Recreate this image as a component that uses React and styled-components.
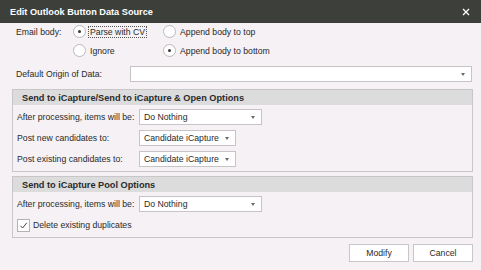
import styled, { createGlobalStyle } from 'styled-components'

const GlobalStyle = createGlobalStyle`
  html, body {
    margin: 0;
    padding: 0;
    background: #f5f1f4;
  }
  body {
    font-family: "Liberation Sans", Arial, sans-serif;
    font-size: 8.7px;
    color: #2a2a2a;
  }
`

function App() {
  return (
    <Dialog>
      <GlobalStyle />
      <TitleBar>
        <span>Edit Outlook Button Data Source</span>
        <svg width="8" height="8" viewBox="0 0 8 8">
          <path d="M1 1 L7 7 M7 1 L1 7" stroke="#ffffff" strokeWidth="1.3" />
        </svg>
      </TitleBar>

      <Body>
        <EmailGrid>
          <Label>Email body:</Label>
          <Radio checked focused>Parse with CV</Radio>
          <Radio>Append body to top</Radio>
          <span />
          <Radio>Ignore</Radio>
          <Radio checked>Append body to bottom</Radio>
        </EmailGrid>

        <OriginRow>
          <Label width={114}>Default Origin of Data:</Label>
          <Combo grow />
        </OriginRow>

        <Group>
          <GroupHeader>Send to iCapture/Send to iCapture &amp; Open Options</GroupHeader>
          <GroupBody>
            <FieldRow>
              <Label width={122}>After processing, items will be:</Label>
              <Combo width={123} value="Do Nothing" />
            </FieldRow>
            <FieldRow>
              <Label width={122}>Post new candidates to:</Label>
              <Combo width={97} value="Candidate iCapture" />
            </FieldRow>
            <FieldRow>
              <Label width={122}>Post existing candidates to:</Label>
              <Combo width={97} value="Candidate iCapture" />
            </FieldRow>
          </GroupBody>
        </Group>

        <Group second>
          <GroupHeader>Send to iCapture Pool Options</GroupHeader>
          <GroupBody>
            <FieldRow>
              <Label width={122}>After processing, items will be:</Label>
              <Combo width={123} value="Do Nothing" />
            </FieldRow>
            <CheckRow>
              <CheckBox>
                <svg width="9" height="9" viewBox="0 0 9 9">
                  <path d="M1.5 4.8 L3.6 7 L7.8 1.8" stroke="#444" strokeWidth="1" fill="none" />
                </svg>
              </CheckBox>
              <span>Delete existing duplicates</span>
            </CheckRow>
          </GroupBody>
        </Group>

        <Footer>
          <Button>Modify</Button>
          <Button>Cancel</Button>
        </Footer>
      </Body>
    </Dialog>
  )
}

function Radio({ checked, focused, children }) {
  return (
    <RadioItem>
      <RadioCircle>{ checked && <RadioDot /> }</RadioCircle>
      <RadioText focused={ focused }>{ children }</RadioText>
    </RadioItem>
  )
}

function Combo({ width, grow, value }) {
  return (
    <ComboBox width={ width } grow={ grow }>
      <span>{ value }</span>
      <Arrow />
    </ComboBox>
  )
}

// Styled Components
const Dialog = styled.div`
  width: 481px;
  height: 270px;
  background: #f5f1f4;
  display: flex;
  flex-direction: column;
  overflow: hidden;
`

const TitleBar = styled.div`
  height: 23px;
  flex: none;
  background: #3d3f3b;
  color: #ffffff;
  font-weight: bold;
  font-size: 9.2px;
  display: flex;
  align-items: center;
  justify-content: space-between;
  padding: 0 11px 0 10px;
`

const Body = styled.div`
  padding: 0 8px 0 12px;
  display: flex;
  flex-direction: column;
`

const EmailGrid = styled.div`
  display: grid;
  grid-template-columns: 57px 90px auto;
  grid-auto-rows: 17px;
  row-gap: 2px;
  padding-left: 4px;
  align-items: center;
`

const Label = styled.span`
  width: ${ (p) => (p.width ? `${ p.width }px` : 'auto') };
  flex: none;
  white-space: nowrap;
`

const RadioItem = styled.div`
  display: flex;
  align-items: center;
  gap: 2px;
`

const RadioCircle = styled.span`
  width: 11px;
  height: 11px;
  border-radius: 50%;
  border: 1px solid #bab8ba;
  background: #ffffff;
  display: flex;
  align-items: center;
  justify-content: center;
`

const RadioDot = styled.span`
  width: 3px;
  height: 3px;
  border-radius: 50%;
  background: #3a3a3a;
`

const RadioText = styled.span`
  padding: 0 1px;
  border: 1px dotted ${ (p) => (p.focused ? '#555' : 'transparent') };
  white-space: nowrap;
`

const OriginRow = styled.div`
  display: flex;
  align-items: center;
  margin-top: 7px;
  padding-left: 4px;
  margin-right: 1px;
`

const ComboBox = styled.div`
  height: 16px;
  box-sizing: border-box;
  width: ${ (p) => (p.grow ? 'auto' : `${ p.width }px`) };
  flex: ${ (p) => (p.grow ? '1' : 'none') };
  background: #ffffff;
  border: 1px solid #c6c4c6;
  display: flex;
  align-items: center;
  justify-content: space-between;
  padding: 0 6px 0 4px;
`

const Arrow = styled.span`
  width: 0;
  height: 0;
  border-left: 2.5px solid transparent;
  border-right: 2.5px solid transparent;
  border-top: 3px solid #6a6a6a;
`

const Group = styled.div`
  margin-top: ${ (p) => (p.second ? '4px' : '7px') };
  border: 1px solid #c8c6c8;
  display: flex;
  flex-direction: column;
`

const GroupHeader = styled.div`
  height: 15px;
  background: #dcdcdc;
  font-weight: bold;
  font-size: 9.2px;
  display: flex;
  align-items: center;
  padding-left: 9px;
`

const GroupBody = styled.div`
  padding: 4px 0 4px 4px;
  display: flex;
  flex-direction: column;
  gap: 5px;
`

const FieldRow = styled.div`
  display: flex;
  align-items: center;
`

const CheckRow = styled.div`
  display: flex;
  align-items: center;
  gap: 3px;
  height: 14px;
  margin-top: 1px;
  margin-bottom: 1px;
`

const CheckBox = styled.span`
  width: 11px;
  height: 11px;
  border: 1px solid #b4b2b4;
  background: #ffffff;
  display: flex;
  align-items: center;
  justify-content: center;
`

const Footer = styled.div`
  display: flex;
  justify-content: flex-end;
  gap: 4px;
  margin-top: 6px;
`

const Button = styled.button`
  width: 60px;
  height: 18px;
  background: #ffffff;
  border: 1px solid #c8c6c8;
  font-family: "Liberation Sans", Arial, sans-serif;
  font-size: 8.7px;
  color: #2a2a2a;
  padding: 0;
`

export default App
